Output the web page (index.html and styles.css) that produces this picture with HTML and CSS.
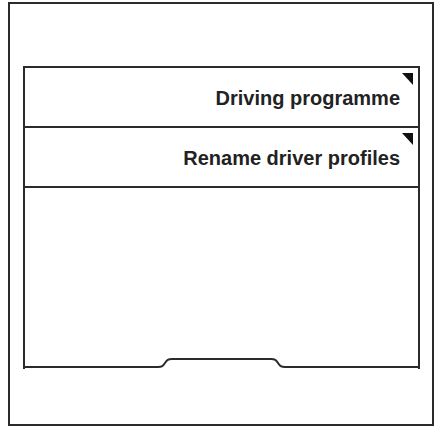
FILE: index.html
```html
<!DOCTYPE html>
<html>
<head>
    <title>Settings menu</title>
    <link rel="stylesheet" href="styles.css">
</head>
<body>
    <div class="screen">
        <div class="panel">
            <div class="row">
                <span class="label">Driving programme</span>
                <span class="corner"></span>
            </div>
            <div class="row">
                <span class="label">Rename driver profiles</span>
                <span class="corner"></span>
            </div>
            <div class="filler"></div>
            <!-- bottom edge with the tab notch -->
            <svg class="notch" width="393" height="12" viewBox="0 0 393 12">
                <path d="M0 10 H133 C137 10 138 9 140 6 C142 3 143 2 147 2 H246 C250 2 251 3 253 6 C255 9 256 10 260 10 H393"
                      fill="none" stroke="#2b2b2b" stroke-width="2"/>
            </svg>
        </div>
    </div>
</body>
</html>
```

FILE: styles.css
```css
body {
    margin: 0;
    background-color: white;
    font-family: "Liberation Sans", Arial, sans-serif;
}
.screen {
    box-sizing: border-box;
    width: 426px;
    height: 424px;
    margin: 2px 0 0 8px;
    padding: 62px 12px 0 13px;
    border: 2px solid #2b2b2b;
}
.panel {
    box-sizing: border-box;
    width: 397px;
    height: 303px;
    display: flex;
    flex-direction: column;
    border: 2px solid #2b2b2b;
    border-bottom: none;
}
.row {
    position: relative;
    height: 58px;
    flex-shrink: 0;
    padding: 18px 18px 0 0;
    box-sizing: border-box;
    text-align: right;
    border-bottom: 2px solid #2b2b2b;
    height: 60px;
}
.label {
    font-size: 20px;
    font-weight: bold;
    line-height: 24px;
    color: #222;
}
.corner {
    position: absolute;
    top: 5px;
    right: 5px;
    width: 11px;
    height: 12px;
    background-color: #111;
    clip-path: polygon(0 0, 100% 0, 100% 100%);
}
.filler {
    flex: 1;
}
.notch {
    display: block;
    flex-shrink: 0;
}
```
